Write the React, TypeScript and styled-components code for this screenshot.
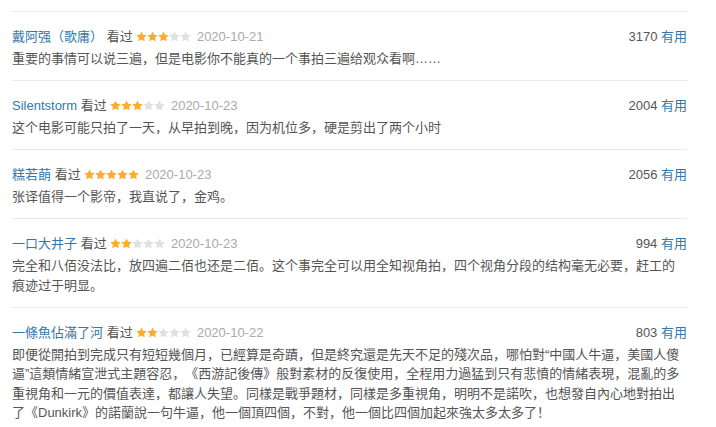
import styled, { createGlobalStyle } from "styled-components";

interface Comment {
  id: number;
  name: string;
  rating: number;
  date: string;
  votes: number;
  content: string;
}

const comments: Comment[] = [
  {
    id: 1,
    name: "戴阿强（歌庸）",
    rating: 3,
    date: "2020-10-21",
    votes: 3170,
    content: "重要的事情可以说三遍，但是电影你不能真的一个事拍三遍给观众看啊……",
  },
  {
    id: 2,
    name: "Silentstorm",
    rating: 3,
    date: "2020-10-23",
    votes: 2004,
    content: "这个电影可能只拍了一天，从早拍到晚，因为机位多，硬是剪出了两个小时",
  },
  {
    id: 3,
    name: "糕若蓢",
    rating: 5,
    date: "2020-10-23",
    votes: 2056,
    content: "张译值得一个影帝，我直说了，金鸡。",
  },
  {
    id: 4,
    name: "一口大井子",
    rating: 2,
    date: "2020-10-23",
    votes: 994,
    content:
      "完全和八佰没法比，放四遍二佰也还是二佰。这个事完全可以用全知视角拍，四个视角分段的结构毫无必要，赶工的痕迹过于明显。",
  },
  {
    id: 5,
    name: "一條魚佔滿了河",
    rating: 2,
    date: "2020-10-22",
    votes: 803,
    content:
      "即便從開拍到完成只有短短幾個月，已經算是奇蹟，但是終究還是先天不足的殘次品，哪怕對“中國人牛逼，美國人傻逼”這類情緒宣泄式主題容忍，《西游記後傳》般對素材的反復使用，全程用力過猛到只有悲憤的情緒表現，混亂的多重視角和一元的價值表達，都讓人失望。同樣是戰爭題材，同樣是多重視角，明明不是諾吹，也想發自內心地對拍出了《Dunkirk》的諾蘭說一句牛逼，他一個頂四個，不對，他一個比四個加起來強太多太多了！",
  },
];

// star drawing
function Star({ filled }: { filled: boolean }) {
  return (
    <StarIcon viewBox="1 1.2 22 21" filled={filled}>
      <path d="M12 1.5l3.2 6.6 7.3 1-5.3 5.1 1.3 7.2L12 18l-6.5 3.4 1.3-7.2L1.5 9.1l7.3-1z" />
    </StarIcon>
  );
}

function Rating({ value }: { value: number }) {
  return (
    <Stars>
      {[1, 2, 3, 4, 5].map((n) => (
        <Star key={n} filled={n <= value} />
      ))}
    </Stars>
  );
}

function CommentItem({ comment }: { comment: Comment }) {
  const { name, rating, date, votes, content } = comment;
  return (
    <Item>
      <Header>
        <Info>
          <UserName>{name}</UserName> <Watched>看过</Watched>{" "}
          <Rating value={rating} /> <Time>{date}</Time>
        </Info>
        <Votes>
          {votes} <UsefulLink>有用</UsefulLink>
        </Votes>
      </Header>
      <Content>{content}</Content>
    </Item>
  );
}

export default function App() {
  return (
    <>
      <GlobalStyle />
      <Page>
        <List>
          {comments.map((c) => (
            <CommentItem key={c.id} comment={c} />
          ))}
        </List>
      </Page>
    </>
  );
}

const GlobalStyle = createGlobalStyle`
  html, body {
    margin: 0;
    padding: 0;
    background: #fff;
  }
  body {
    font-family: "Liberation Sans", "Noto Sans CJK SC", sans-serif;
    font-size: 13px;
    color: #555;
    text-spacing-trim: space-all;
  }
`;

const Page = styled.div`
  width: 716px;
  height: 427px;
  overflow: hidden;
  padding: 11px 29px 0 12px;
  box-sizing: border-box;
`;

const List = styled.div`
  width: 675px;
`;

const Item = styled.div`
  border-top: 1px solid #eaeaea;
  padding: 15px 0 11.5px;
`;

const Header = styled.div`
  display: flex;
  justify-content: space-between;
  align-items: baseline;
  line-height: 20px;
  margin-bottom: 2px;
`;

const Info = styled.div`
  white-space: nowrap;
`;

const UserName = styled.a`
  color: #3377aa;
  text-decoration: none;
`;

const Watched = styled.span`
  color: #555;
`;

const Stars = styled.span`
  display: inline-flex;
  width: 55px;
  height: 11px;
  vertical-align: -1px;
`;

const StarIcon = styled.svg<{ filled: boolean }>`
  width: 11px;
  height: 11px;
  fill: ${(props) => (props.filled ? "#ffac2d" : "#e0e0e0")};
`;

const Time = styled.span`
  color: #aaa;
  margin-left: 2px;
`;

const Votes = styled.span`
  color: #555;
`;

const UsefulLink = styled.a`
  color: #3377aa;
  text-decoration: none;
`;

const Content = styled.p`
  margin: 0;
  line-height: 19.5px;
  color: #555;
  word-wrap: break-word;
`;
